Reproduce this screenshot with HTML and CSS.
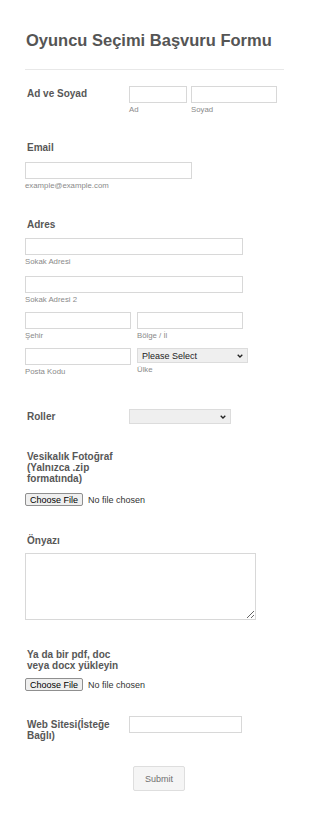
FILE: index.html
```html
<!DOCTYPE html>
<html lang="tr">
<head>
  <meta charset="UTF-8" />
  <meta name="viewport" content="width=device-width, initial-scale=1.0" />
  <title>Oyuncu Seçimi Başvuru Formu</title>
  <link rel="stylesheet" href="styles.css">
</head>
<body>
  <form class="form">
    <h1 class="title">Oyuncu Seçimi Başvuru Formu</h1>
    <hr class="divider" />

    <div class="row name-row">
      <label class="label side">Ad ve Soyad</label>
      <div class="pair">
        <div class="sub">
          <input type="text" class="field first-name" />
          <span class="hint">Ad</span>
        </div>
        <div class="sub">
          <input type="text" class="field last-name" />
          <span class="hint">Soyad</span>
        </div>
      </div>
    </div>

    <div class="block email-block">
      <label class="label">Email</label>
      <input type="email" class="field email" />
      <span class="hint">example@example.com</span>
    </div>

    <div class="block address-block">
      <label class="label">Adres</label>
      <input type="text" class="field street" />
      <span class="hint">Sokak Adresi</span>
      <input type="text" class="field street street-2" />
      <span class="hint">Sokak Adresi 2</span>
      <div class="pair addr-pair">
        <div class="sub">
          <input type="text" class="field half" />
          <span class="hint">Şehir</span>
        </div>
        <div class="sub">
          <input type="text" class="field half" />
          <span class="hint">Bölge / İl</span>
        </div>
      </div>
      <div class="pair addr-pair">
        <div class="sub">
          <input type="text" class="field half" />
          <span class="hint">Posta Kodu</span>
        </div>
        <div class="sub">
          <select class="dropdown country">
            <option>Please Select</option>
          </select>
          <span class="hint">Ülke</span>
        </div>
      </div>
    </div>

    <div class="row roles-row">
      <label class="label side">Roller</label>
      <select class="dropdown roles">
        <option></option>
      </select>
    </div>

    <div class="block photo-block">
      <label class="label narrow">Vesikalık Fotoğraf (Yalnızca .zip formatında)</label>
      <input type="file" class="upload" />
    </div>

    <div class="block letter-block">
      <label class="label">Önyazı</label>
      <textarea class="letter"></textarea>
    </div>

    <div class="block doc-block">
      <label class="label narrow">Ya da bir pdf, doc veya docx yükleyin</label>
      <input type="file" class="upload" />
    </div>

    <div class="row web-row">
      <label class="label side">Web Sitesi(İsteğe Bağlı)</label>
      <input type="text" class="field website" />
    </div>

    <div class="actions">
      <button type="button" class="submit">Submit</button>
    </div>
  </form>
</body>
</html>
```

FILE: styles.css
```css
* {
  box-sizing: border-box;
}
body {
  margin: 0;
  background: #fff;
  font-family: "Liberation Sans", Arial, sans-serif;
  color: #555;
}
.form {
  width: 310px;
  padding: 30px 26px 30px 25px;
}
.title {
  margin: 0;
  padding-left: 1px;
  font-size: 16.5px;
  line-height: 20px;
  font-weight: bold;
  color: #555;
}
.divider {
  margin: 19px 0 0;
  width: 259px;
  border: 0;
  border-top: 1px solid #e8e8e8;
}
.label {
  display: block;
  padding-left: 2px;
  font-size: 10px;
  line-height: 12px;
  font-weight: bold;
  color: #575757;
}
.label.narrow {
  width: 104px;
  line-height: 11px;
}
.label.side {
  flex: 0 0 104px;
  padding-top: 2px;
  line-height: 11px;
}
.row {
  display: flex;
  align-items: flex-start;
}
.pair {
  display: flex;
  align-items: flex-start;
}
.sub {
  display: flex;
  flex-direction: column;
}
.hint {
  display: block;
  margin-top: 1px;
  font-size: 7.8px;
  line-height: 9px;
  color: #8a8a8a;
}
.field {
  display: block;
  height: 17px;
  padding: 0 3px;
  border: 1px solid #d8d8d8;
  border-radius: 0;
  background: #fff;
  font-family: inherit;
  font-size: 9px;
}
.name-row {
  margin-top: 16px;
}
.name-row .hint {
  margin-top: 2px;
}
.first-name {
  width: 58px;
  margin-right: 4px;
}
.last-name {
  width: 86px;
}
.email-block {
  margin-top: 28px;
}
.email {
  width: 167px;
  margin-top: 8px;
}
.email-block .hint {
  margin-top: 2px;
}
.address-block {
  margin-top: 29px;
}
.street {
  width: 218px;
  margin-top: 7px;
}
.street-2 {
  margin-top: 10px;
}
.address-block .hint {
  margin-top: 2px;
}
.addr-pair {
  margin-top: 8px;
}
.half {
  width: 106px;
  margin-right: 6px;
}
.dropdown {
  display: block;
  height: 15px;
  padding: 0 12px 0 4px;
  border: 1px solid #dcdcdc;
  border-radius: 0;
  -webkit-appearance: none;
  appearance: none;
  background-color: #efefef;
  background-image: url("data:image/svg+xml,%3Csvg xmlns='http://www.w3.org/2000/svg' width='6' height='4' viewBox='0 0 6 4'%3E%3Cpath d='M0.7 0.7 L3 3 L5.3 0.7' fill='none' stroke='%23222' stroke-width='1.3'/%3E%3C/svg%3E");
  background-repeat: no-repeat;
  background-position: right 4px center;
  color: #222;
  font-family: inherit;
  font-size: 9px;
}
.country {
  width: 111px;
}
.roles-row {
  margin-top: 33px;
}
.roles {
  width: 102px;
}
.photo-block {
  margin-top: 27px;
}
.upload {
  display: block;
  margin-top: 9px;
  font-family: "Liberation Sans", Arial, sans-serif;
  font-size: 9px;
  color: #333;
}
.upload::file-selector-button {
  height: 13px;
  margin-right: 5px;
  padding: 0 4px;
  border: 1px solid #8f8f8f;
  border-radius: 2px;
  background: #efefef;
  color: #000;
  font-family: inherit;
  font-size: 9px;
}
.letter-block {
  margin-top: 29px;
}
.letter {
  display: block;
  width: 231px;
  height: 67px;
  margin-top: 6px;
  border: 1px solid #d8d8d8;
  border-radius: 0;
}
.doc-block {
  margin-top: 29px;
}
.doc-block .upload {
  margin-top: 7px;
}
.web-row {
  margin-top: 25px;
}
.web-row .label.side {
  padding-top: 3px;
}
.website {
  width: 113px;
}
.actions {
  margin-top: 25px;
  padding-left: 108px;
}
.submit {
  width: 52px;
  height: 25px;
  padding: 0;
  border: 1px solid #dedede;
  border-radius: 2px;
  background: #f5f5f5;
  color: #707070;
  font-family: inherit;
  font-size: 9px;
  cursor: pointer;
}
```
